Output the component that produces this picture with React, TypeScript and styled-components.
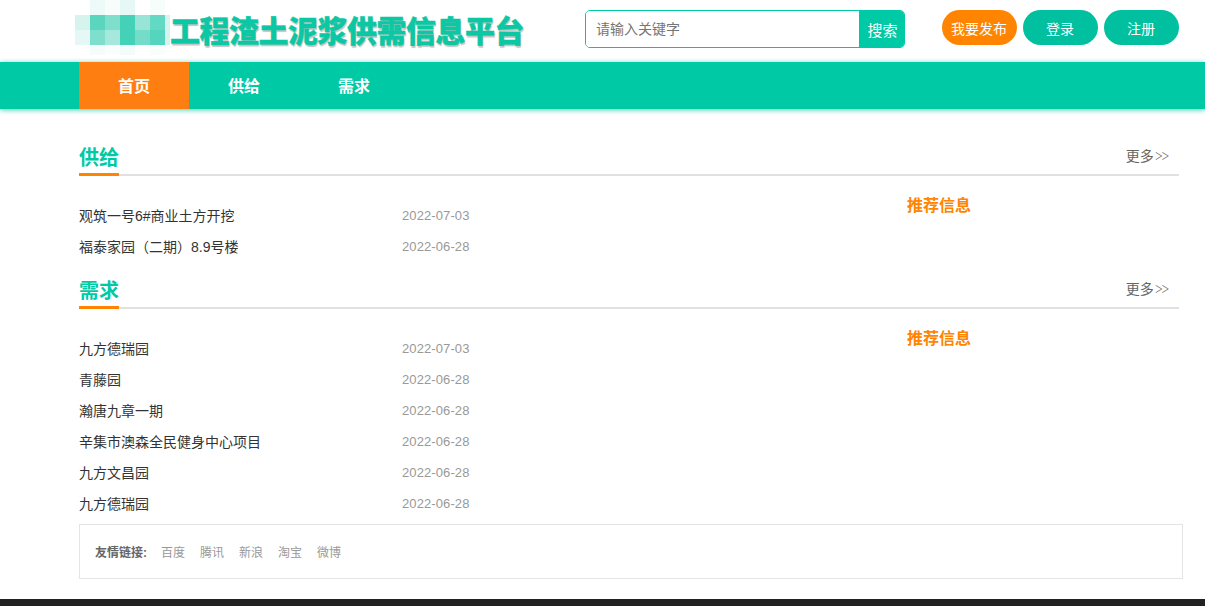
import styled, { createGlobalStyle } from "styled-components";

const GlobalStyle = createGlobalStyle`
  * { box-sizing: border-box; }
  html, body { margin: 0; padding: 0; background: #fff; }
  body {
    font-family: "Liberation Sans", "Noto Sans CJK SC", sans-serif;
    font-size: 14px;
    color: #333;
  }
`;

const Container = styled.div`
  width: 1100px;
  margin-left: 79px;
`;

const Header = styled(Container)`
  height: 61px;
  display: flex;
  align-items: flex-start;
`;

const Logo = styled.div`
  width: 456px;
  height: 61px;
  margin-left: -4px;
  display: flex;
  align-items: flex-start;
`;

const Mosaic = styled.div`
  width: 95px;
  height: 55px;
  flex: none;
  display: grid;
  grid-template-columns: repeat(6, 15px) 5px;
  grid-template-rows: 15px 15px 15px 10px;
`;

const Cell = styled.div<{ $c: string }>`
  background: ${(p) => p.$c};
`;

const LogoText = styled.div`
  margin-top: 9px;
  font-family: "Noto Sans CJK SC", sans-serif;
  font-size: 30px;
  line-height: 40px;
  font-weight: 900;
  letter-spacing: -0.5px;
  white-space: nowrap;
  color: #0bc7a3;
  -webkit-text-stroke: 0.4px #0bc7a3;
  text-shadow: 1px 2px 1px #c4c4c4;
`;

const SearchBox = styled.div`
  width: 320px;
  height: 38px;
  margin: 10px 0 0 54px;
  display: flex;
  border: 1px solid #00c9a5;
  border-radius: 5px;
  overflow: hidden;
`;

const SearchInput = styled.input`
  flex: 1;
  min-width: 0;
  border: none;
  outline: none;
  padding: 0 10px;
  font: inherit;
  &::placeholder { color: #757575; opacity: 1; }
`;

const SearchButton = styled.button`
  width: 45px;
  border: none;
  padding: 0 0 0 2px;
  background: #00c9a5;
  color: #fff;
  font: inherit;
  font-size: 15px;
`;

const Actions = styled.div`
  margin: 10px 0 0 37px;
  display: flex;
  gap: 6px;
`;

const Pill = styled.a<{ $orange?: boolean }>`
  width: 75px;
  height: 35px;
  padding-right: 1px;
  border-radius: 18px;
  display: flex;
  align-items: center;
  justify-content: center;
  background: ${(p) => (p.$orange ? "#ff8400" : "#00c0a0")};
  color: #fff;
  font-size: 14px;
`;

const NavBar = styled.nav`
  height: 47px;
  margin-top: 1px;
  background: #00c9a5;
  box-shadow: 0 1px 5px rgba(0, 190, 160, 0.75);
`;

const NavInner = styled(Container)`
  display: flex;
`;

const NavItem = styled.a<{ $active?: boolean }>`
  width: 110px;
  height: 47px;
  padding-bottom: 2px;
  display: flex;
  align-items: center;
  justify-content: center;
  background: ${(p) => (p.$active ? "#ff7e11" : "transparent")};
  color: #fff;
  font-size: 16px;
  font-weight: bold;
`;

const Main = styled(Container)`
  padding-top: 30px;
`;

const Section = styled.section`
  & + & {
    margin-top: 10px;
  }
`;

const SectionHead = styled.div`
  height: 37px;
  display: flex;
  justify-content: space-between;
  align-items: flex-start;
  border-bottom: 2px solid #e0e0e0;
`;

const SectionTitle = styled.h2`
  margin: 0;
  height: 37px;
  line-height: 39px;
  font-size: 20px;
  font-weight: bold;
  color: #00c9a5;
  border-bottom: 3px solid #ff8400;
`;

const More = styled.a`
  margin-right: 12px;
  line-height: 34px;
  font-size: 14px;
  color: #666;
`;

const Chevrons = styled.span`
  font-family: Inter, "Liberation Sans", sans-serif;
  font-size: 15px;
  font-weight: 200;
  letter-spacing: -3px;
  color: #666;
`;

const SectionBody = styled.div`
  display: flex;
  padding-top: 24px;
`;

const List = styled.ul`
  width: 828px;
  flex: none;
  margin: 0;
  padding: 0;
  list-style: none;
`;

const Row = styled.li`
  height: 31px;
  display: flex;
  align-items: center;
`;

const RowTitle = styled.a`
  width: 323px;
  margin-bottom: 2px;
  color: #333;
  font-size: 14px;
`;

const RowDate = styled.span`
  color: #999;
  font-size: 13px;
  letter-spacing: 0.1px;
`;

const Recommend = styled.h3`
  margin: -6px 0 0;
  font-size: 16px;
  line-height: 24px;
  font-weight: bold;
  color: #ff8400;
`;

const Links = styled.div`
  width: 1104px;
  height: 55px;
  margin-top: 5px;
  padding: 0 15px;
  display: flex;
  align-items: center;
  border: 1px solid #e4e4e4;
  font-size: 12px;
`;

const LinksLabel = styled.span`
  margin-right: 14px;
  font-weight: bold;
  color: #666;
`;

const LinkItem = styled.a`
  margin-right: 15px;
  color: #999;
`;

const Footer = styled.div`
  height: 7px;
  margin-top: 20px;
  background: #222;
`;

const mosaic = [
  "#ffffff", "#eefaf8", "#f6fdfb", "#e6f8f5", "#ffffff", "#f6fdfb", "#ffffff",
  "#d5f4ee", "#5ad6be", "#7fdfcd", "#43d2b7", "#98e4d6", "#63d8c2", "#d5f4ee",
  "#e6f8f5", "#7fdfcd", "#a6e9dc", "#43d2b7", "#75dcc9", "#55d5bd", "#d5f4ee",
  "#ffffff", "#f5fcfb", "#fafefd", "#f3fcfa", "#ffffff", "#f9fefd", "#ffffff",
];

const supply = [
  { title: "观筑一号6#商业土方开挖", date: "2022-07-03" },
  { title: "福泰家园（二期）8.9号楼", date: "2022-06-28" },
];

const demand = [
  { title: "九方德瑞园", date: "2022-07-03" },
  { title: "青藤园", date: "2022-06-28" },
  { title: "瀚唐九章一期", date: "2022-06-28" },
  { title: "辛集市澳森全民健身中心项目", date: "2022-06-28" },
  { title: "九方文昌园", date: "2022-06-28" },
  { title: "九方德瑞园", date: "2022-06-28" },
];

function InfoSection({ title, rows }: { title: string; rows: { title: string; date: string }[] }) {
  return (
    <Section>
      <SectionHead>
        <SectionTitle>{title}</SectionTitle>
        <More>
          更多<Chevrons>&gt;&gt;</Chevrons>
        </More>
      </SectionHead>
      <SectionBody>
        <List>
          {rows.map((r, i) => (
            <Row key={i}>
              <RowTitle>{r.title}</RowTitle>
              <RowDate>{r.date}</RowDate>
            </Row>
          ))}
        </List>
        <Recommend>推荐信息</Recommend>
      </SectionBody>
    </Section>
  );
}

export default function App() {
  return (
    <>
      <GlobalStyle />
      <Header>
        <Logo>
          <Mosaic>
            {mosaic.map((c, i) => (
              <Cell key={i} $c={c} />
            ))}
          </Mosaic>
          <LogoText>工程渣土泥浆供需信息平台</LogoText>
        </Logo>
        <SearchBox>
          <SearchInput placeholder="请输入关键字" />
          <SearchButton>搜索</SearchButton>
        </SearchBox>
        <Actions>
          <Pill $orange>我要发布</Pill>
          <Pill>登录</Pill>
          <Pill>注册</Pill>
        </Actions>
      </Header>
      <NavBar>
        <NavInner>
          <NavItem $active>首页</NavItem>
          <NavItem>供给</NavItem>
          <NavItem>需求</NavItem>
        </NavInner>
      </NavBar>
      <Main>
        <InfoSection title="供给" rows={supply} />
        <InfoSection title="需求" rows={demand} />
      </Main>
      <Container>
        <Links>
          <LinksLabel>友情链接:</LinksLabel>
          {["百度", "腾讯", "新浪", "淘宝", "微博"].map((l) => (
            <LinkItem key={l}>{l}</LinkItem>
          ))}
        </Links>
      </Container>
      <Footer />
    </>
  );
}
